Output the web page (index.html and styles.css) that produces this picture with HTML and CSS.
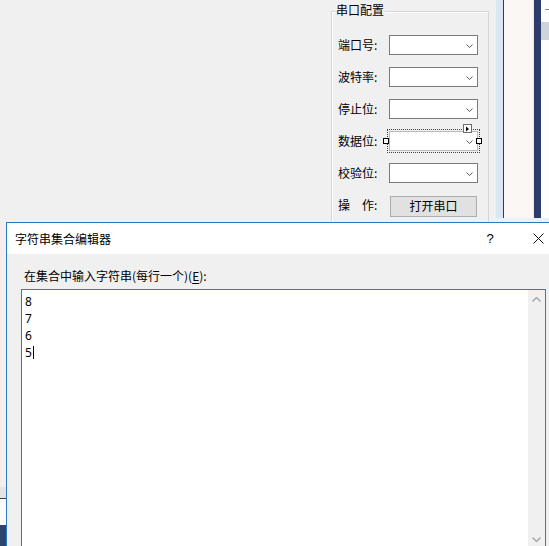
FILE: index.html
```html
<!DOCTYPE html>
<html>
<head>
<meta charset="utf-8">
<link rel="stylesheet" href="styles.css">
</head>
<body>
<div class="desk">
  <div class="form">
    <div class="form-main">
      <div class="group">
        <div class="group-title">串口配置</div>
        <div class="rows">
          <div class="row"><span class="lbl">端口号:</span><div class="combo"><svg class="chev" width="7" height="4" viewBox="0 0 7 4"><path d="M0.5 0.5 L3.5 3.5 L6.5 0.5" /></svg></div></div>
          <div class="row"><span class="lbl">波特率:</span><div class="combo"><svg class="chev" width="7" height="4" viewBox="0 0 7 4"><path d="M0.5 0.5 L3.5 3.5 L6.5 0.5" /></svg></div></div>
          <div class="row"><span class="lbl">停止位:</span><div class="combo"><svg class="chev" width="7" height="4" viewBox="0 0 7 4"><path d="M0.5 0.5 L3.5 3.5 L6.5 0.5" /></svg></div></div>
          <div class="row"><span class="lbl">数据位:</span><div class="combo selected"><svg class="chev" width="7" height="4" viewBox="0 0 7 4"><path d="M0.5 0.5 L3.5 3.5 L6.5 0.5" /></svg><span class="handle handle-l"></span><span class="handle handle-r"></span><span class="smart-tag"><svg width="7" height="6" viewBox="0 0 7 6"><path d="M2 0.5 L5 3 L2 5.5 Z" /></svg></span></div></div>
          <div class="row"><span class="lbl">校验位:</span><div class="combo"><svg class="chev" width="7" height="4" viewBox="0 0 7 4"><path d="M0.5 0.5 L3.5 3.5 L6.5 0.5" /></svg></div></div>
          <div class="row"><span class="lbl">操　作:</span><div class="btn">打开串口</div></div>
        </div>
      </div>
    </div>
    <div class="strip strip-blue"></div>
    <div class="strip strip-dark"></div>
    <div class="strip strip-pale"></div>
    <div class="strip strip-navy"></div>
    <div class="strip strip-white"><div class="tick"></div><div class="gray-bar"></div></div>
  </div>
  <div class="lower">
    <div class="edge">
      <div class="edge-gray"></div>
      <div class="edge-light"></div>
      <div class="edge-line"></div>
      <div class="edge-white"></div>
      <div class="edge-navy"></div>
    </div>
  </div>
</div>

<div class="dialog">
  <div class="titlebar">
    <span class="title">字符串集合编辑器</span>
    <span class="tb-btn help">?</span>
    <span class="tb-btn close"><svg width="11" height="11" viewBox="0 0 11 11"><path d="M0.5 0.5 L10.5 10.5 M10.5 0.5 L0.5 10.5" /></svg></span>
  </div>
  <div class="dlg-body">
    <div class="prompt">在集合中输入字符串(每行一个)(<u>E</u>):</div>
    <div class="textbox">
      <div class="lines">
        <div class="line">8</div>
        <div class="line">7</div>
        <div class="line">6</div>
        <div class="line">5<span class="caret"></span></div>
      </div>
      <div class="vscroll">
        <svg class="sarrow" width="9" height="5" viewBox="0 0 9 5"><path d="M0.5 4.5 L4.5 0.5 L8.5 4.5" /></svg>
        <svg class="sarrow" width="9" height="5" viewBox="0 0 9 5"><path d="M0.5 0.5 L4.5 4.5 L8.5 0.5" /></svg>
      </div>
    </div>
  </div>
</div>
</body>
</html>
```

FILE: styles.css
```css
* { box-sizing: border-box; margin: 0; padding: 0; }
html, body { width: 549px; height: 546px; overflow: hidden; }
body {
  background: #f0f0f0;
  font-family: "Noto Sans CJK SC", "Noto Sans", sans-serif;
  font-size: 12px;
  color: #000;
  position: relative;
}

.desk { display: flex; flex-direction: column; height: 546px; }
.form { display: flex; height: 222px; flex: none; }
.form-main { width: 496px; flex: none; padding: 11px 0 0 331px; overflow: hidden; }

.group {
  width: 158px;
  height: 230px;
  border: 1px solid #d6d6d6;
  box-shadow: inset 1px 1px 0 #ffffff;
}
.group-title {
  width: fit-content;
  margin: -9px 0 0 3px;
  padding: 0 1px;
  background: #f0f0f0;
  line-height: 14px;
  height: 14px;
}
.rows {
  display: flex;
  flex-direction: column;
  gap: 12px;
  padding: 18px 0 0 6px;
}
.row { display: flex; align-items: center; height: 20px; }
.lbl { width: 51px; flex: none; line-height: 14px; white-space: nowrap; }
.combo {
  position: relative;
  width: 89px;
  height: 20px;
  background: #fff;
  border: 1px solid #7a7a7a;
  display: flex;
  align-items: center;
  justify-content: flex-end;
  padding: 1px 4px 0 0;
}
.chev path { fill: none; stroke: #5a5a5a; stroke-width: 1; }
.combo.selected { outline: 1px dotted #404040; outline-offset: 1px; border-color: #b8b8b8; }
.handle {
  position: absolute;
  top: 6px;
  width: 6px;
  height: 6px;
  background: #fff;
  border: 1px solid #000;
}
.handle-l { left: -7px; }
.handle-r { left: 86px; }
.smart-tag {
  position: absolute;
  left: 73px;
  top: -8px;
  width: 9px;
  height: 9px;
  background: #fff;
  border: 1px solid #6d6d6d;
  display: flex;
  align-items: center;
  justify-content: center;
}
.smart-tag path { fill: #000; }
.btn {
  margin-left: 1px;
  margin-top: 2px;
  width: 87px;
  height: 21px;
  background: #e1e1e1;
  border: 1px solid #adadad;
  display: flex;
  align-items: center;
  justify-content: center;
  line-height: 14px;
}

.strip { flex: none; height: 218px; }
.strip-blue { width: 7px; background: #dae6f4; }
.strip-dark { width: 1px; background: #2f3d5e; }
.strip-pale { width: 30px; background: #fbf7f4; border-right: 1px solid #e6e9ef; }
.strip-navy { width: 7px; background: #2d3c69; }
.strip-white { width: 8px; background: #fdfdfd; padding-top: 9px; }
.tick { width: 4px; height: 1px; background: #8a8a8a; margin-left: 4px; }
.gray-bar { margin-top: 12px; height: 18px; background: #cfd3dc; }

.lower { flex: 1; display: flex; }
.edge { width: 6px; display: flex; flex-direction: column; }
.edge-gray { height: 265px; background: #f0f0f0; border-left: 2px solid #f7ece6; }
.edge-light { height: 11px; background: #e4e4e4; }
.edge-line { height: 1px; background: #3a3a3a; }
.edge-white { height: 26px; background: #fafafa; }
.edge-navy { flex: 1; background: #2e4470; }

.dialog {
  position: absolute;
  left: 6px;
  top: 222px;
  width: 556px;
  height: 340px;
  border: 1px solid #2a77c3;
  background: #f0f0f0;
  display: flex;
  flex-direction: column;
}
.titlebar {
  height: 31px;
  background: #fff;
  display: flex;
  align-items: center;
  padding-left: 8px;
  flex: none;
}
.title { flex: 1; line-height: 14px; }
.tb-btn {
  width: 46px;
  height: 31px;
  display: flex;
  align-items: center;
  justify-content: center;
  font-family: "Liberation Sans", sans-serif;
  font-size: 13px;
}
.help { padding-right: 4px; }
.close path { fill: none; stroke: #111; stroke-width: 1; }

.dlg-body { flex: 1; padding: 14px 0 0 14px; }
.prompt { padding-left: 3px; line-height: 16px; height: 16px; }
.prompt u { text-decoration: underline; text-underline-offset: 2px; }
.textbox {
  margin-top: 5px;
  width: 525px;
  height: 260px;
  background: #fff;
  border: 1px solid #2b7cc6;
  display: flex;
}
.lines {
  flex: 1;
  padding: 3px 0 0 3px;
  font-family: "Noto Sans", sans-serif;
  font-size: 12px;
  line-height: 17px;
}
.line { height: 17px; display: flex; align-items: center; }
.caret { display: inline-block; width: 1px; height: 13px; background: #000; margin-left: 1px; }
.vscroll {
  width: 17px;
  background: #f0f0f0;
  display: flex;
  flex-direction: column;
  justify-content: space-between;
  align-items: center;
  padding: 7px 0 6px;
}
.sarrow path { fill: none; stroke: #a3a3a3; stroke-width: 1.4; }
```
